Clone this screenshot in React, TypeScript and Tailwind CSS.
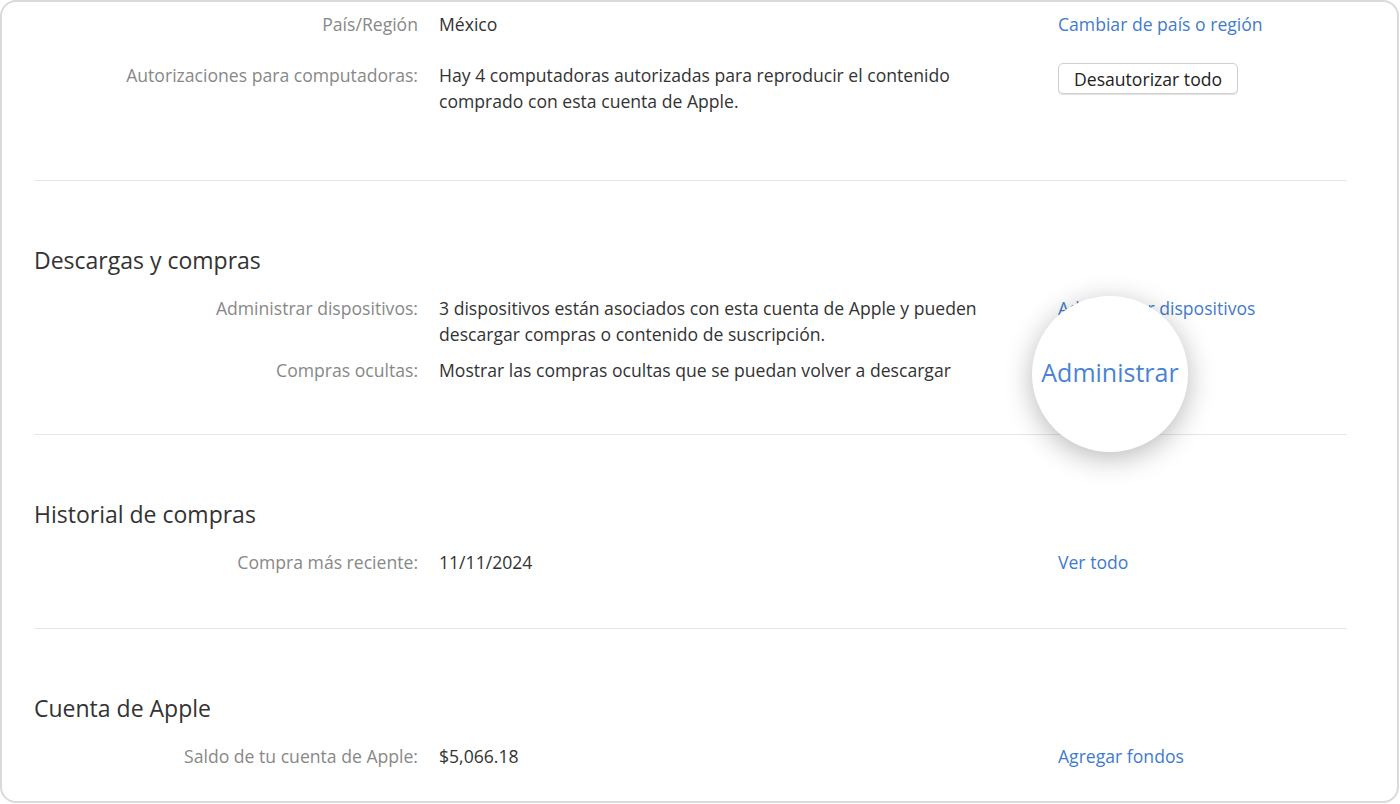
import React from "react";

const font = { fontFamily: '"Open Sans", "Noto Sans", sans-serif' };

function Row({
  label,
  value,
  action,
  className = "",
}: {
  label: React.ReactNode;
  value: React.ReactNode;
  action?: React.ReactNode;
  className?: string;
}) {
  return (
    <div className={`grid grid-cols-[384px_640px_1fr] text-[17.6px] leading-[26px] ${className}`}>
      <div className="text-right text-[#888888] whitespace-nowrap">{label}</div>
      <div className="pl-[21px] text-[#333333] whitespace-nowrap">{value}</div>
      <div className="whitespace-nowrap">{action}</div>
    </div>
  );
}

function Link({ children }: { children: React.ReactNode }) {
  return <span className="text-[#3f7bcc]">{children}</span>;
}

function Heading({ children, className = "" }: { children: React.ReactNode; className?: string }) {
  return <div className={`text-[23px] leading-[30px] text-[#333333] ${className}`}>{children}</div>;
}

function Sep({ className = "" }: { className?: string }) {
  return <div className={`h-px bg-[#e6e6e6] mr-[50px] ${className}`} />;
}

export default function App() {
  return (
    <div className="w-[1400px] h-[804px] bg-white overflow-hidden" style={font}>
      <div className="relative w-[1399px] h-[803px] border-2 border-[#dadada] rounded-[16px] pl-[32px] pt-[9px]">
        <Row label="País/Región" value="México" action={<Link>Cambiar de país o región</Link>} />
        <Row
          className="mt-[25px]"
          label="Autorizaciones para computadoras:"
          value={
            <>
              Hay 4 computadoras autorizadas para reproducir el contenido
              <br />
              comprado con esta cuenta de Apple.
            </>
          }
          action={
            <button className="mt-[1px] h-[31px] px-[15px] border border-[#cfcfcf] rounded-[5px] bg-white text-[#222] text-[17.6px] leading-[26px] shadow-[0_1px_1px_rgba(0,0,0,0.12)]">
              Desautorizar todo
            </button>
          }
        />
        <Sep className="mt-[66px]" />

        <Heading className="mt-[64px]">Descargas y compras</Heading>
        <Row
          className="mt-[20px]"
          label="Administrar dispositivos:"
          value={
            <>
              3 dispositivos están asociados con esta cuenta de Apple y pueden
              <br />
              descargar compras o contenido de suscripción.
            </>
          }
          action={<Link>Administrar dispositivos</Link>}
        />
        <Row
          className="mt-[10px]"
          label="Compras ocultas:"
          value="Mostrar las compras ocultas que se puedan volver a descargar"
        />
        <Sep className="mt-[51px]" />

        <Heading className="mt-[64px]">Historial de compras</Heading>
        <Row
          className="mt-[20px]"
          label="Compra más reciente:"
          value="11/11/2024"
          action={<Link>Ver todo</Link>}
        />
        <Sep className="mt-[53px]" />

        <Heading className="mt-[64px]">Cuenta de Apple</Heading>
        <Row
          className="mt-[20px]"
          label="Saldo de tu cuenta de Apple:"
          value="$5,066.18"
          action={<Link>Agregar fondos</Link>}
        />

        <div className="absolute left-[1030px] top-[294px] w-[156px] h-[156px] rounded-full bg-white shadow-[0_6px_28px_rgba(0,0,0,0.28)] flex items-center justify-center pb-[4px]">
          <span className="text-[25px] leading-[32px] text-[#4a83d4]">Administrar</span>
        </div>
      </div>
    </div>
  );
}
